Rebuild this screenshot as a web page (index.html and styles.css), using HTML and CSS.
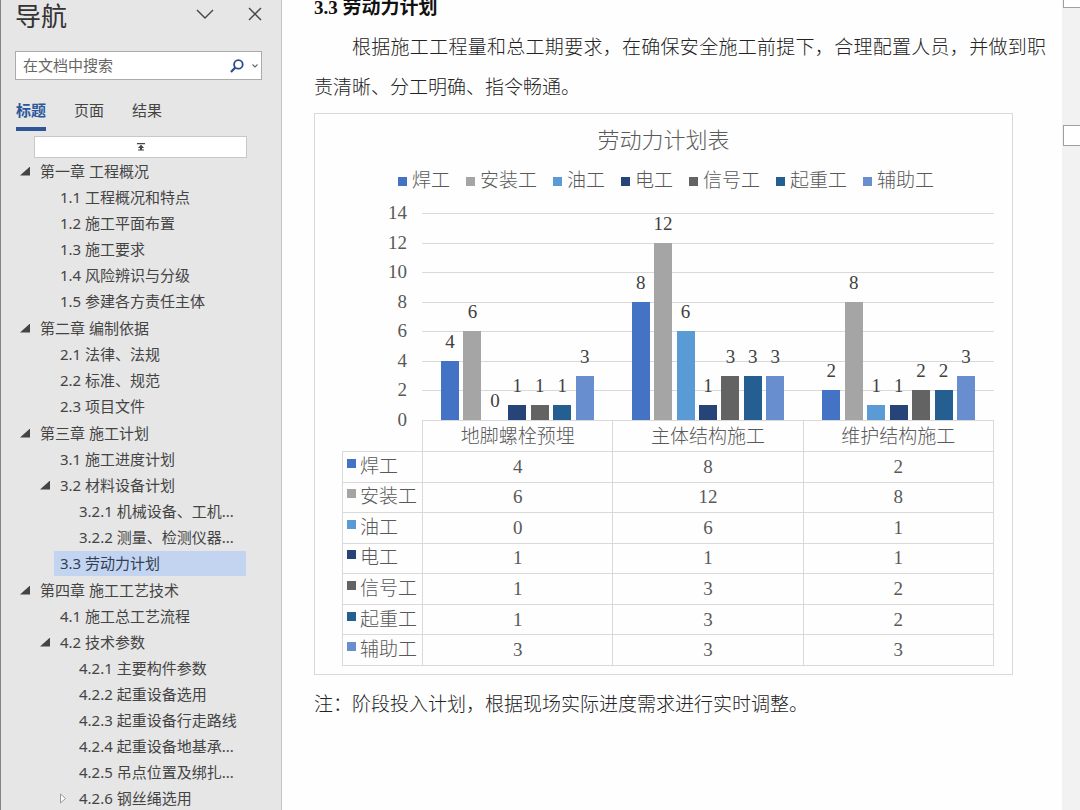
FILE: index.html
```html
<!DOCTYPE html>
<html lang="zh-CN">
<head>
<meta charset="utf-8">
<title>劳动力计划</title>
<link rel="stylesheet" href="styles.css">
</head>
<body>
<div class="app">
  <aside class="nav">
    <header class="nav-head">
      <h1 class="nav-title">导航</h1>
      <button class="icon-btn" type="button" aria-label="任务窗格选项"><svg width="18" height="18" viewBox="0 0 18 18"><path d="M1 5l8 8 8-8" fill="none" stroke="#444" stroke-width="1.4"/></svg></button>
      <button class="icon-btn close" type="button" aria-label="关闭"><svg width="14" height="14" viewBox="0 0 14 14"><path d="M1 1l12 12M13 1L1 13" fill="none" stroke="#444" stroke-width="1.4"/></svg></button>
    </header>
    <form class="search">
      <input class="search-input" type="text" placeholder="在文档中搜索" aria-label="在文档中搜索">
      <button class="icon-btn" type="button" aria-label="搜索"><svg width="14" height="14" viewBox="0 0 14 14"><circle cx="8.4" cy="5.4" r="4.3" fill="none" stroke="#2b4a8c" stroke-width="1.8"/><path d="M5.3 8.6L1 13" stroke="#2b4a8c" stroke-width="2.2"/></svg></button>
      <button class="icon-btn" type="button" aria-label="搜索选项"><svg width="6" height="4" viewBox="0 0 6 4"><path d="M.5 .5L3 3 5.500 .5" fill="none" stroke="#666" stroke-width="1.1"/></svg></button>
    </form>
    <div class="tabs" role="tablist">
      <button class="tab active" type="button" role="tab" aria-selected="true">标题</button>
      <button class="tab" type="button" role="tab" aria-selected="false">页面</button>
      <button class="tab" type="button" role="tab" aria-selected="false">结果</button>
    </div>
    <button class="jump" type="button" aria-label="跳转到开头"><svg width="8" height="8" viewBox="0 0 8 8"><path d="M0 .6h8M1 7h6" stroke="#444" stroke-width="1.2"/><path d="M4 1.800l3.200 3.200H.8z" fill="#444"/><path d="M4 4v3" stroke="#444" stroke-width="2"/></svg></button>
    <ul class="tree">
      <li class="chapter"><div class="row l1"><button class="toggle open" type="button" aria-label="折叠"></button><a href="#c1">第一章 工程概况</a></div>
        <ul>
          <li class="row l2"><a href="#s11">1.1 工程概况和特点</a></li>
          <li class="row l2"><a href="#s12">1.2 施工平面布置</a></li>
          <li class="row l2"><a href="#s13">1.3 施工要求</a></li>
          <li class="row l2"><a href="#s14">1.4 风险辨识与分级</a></li>
          <li class="row l2"><a href="#s15">1.5 参建各方责任主体</a></li>
        </ul></li>
      <li class="chapter"><div class="row l1"><button class="toggle open" type="button" aria-label="折叠"></button><a href="#c2">第二章 编制依据</a></div>
        <ul>
          <li class="row l2"><a href="#s21">2.1 法律、法规</a></li>
          <li class="row l2"><a href="#s22">2.2 标准、规范</a></li>
          <li class="row l2"><a href="#s23">2.3 项目文件</a></li>
        </ul></li>
      <li class="chapter"><div class="row l1"><button class="toggle open" type="button" aria-label="折叠"></button><a href="#c3">第三章 施工计划</a></div>
        <ul>
          <li class="row l2"><a href="#s31">3.1 施工进度计划</a></li>
          <li class="row l2"><button class="toggle open" type="button" aria-label="折叠"></button><a href="#s32">3.2 材料设备计划</a></li>
          <li class="row l3"><a href="#s321">3.2.1 机械设备、工机...</a></li>
          <li class="row l3"><a href="#s322">3.2.2 测量、检测仪器...</a></li>
          <li class="row l2"><a class="current" href="#s33">3.3 劳动力计划</a></li>
        </ul></li>
      <li class="chapter"><div class="row l1"><button class="toggle open" type="button" aria-label="折叠"></button><a href="#c4">第四章 施工工艺技术</a></div>
        <ul>
          <li class="row l2"><a href="#s41">4.1 施工总工艺流程</a></li>
          <li class="row l2"><button class="toggle open" type="button" aria-label="折叠"></button><a href="#s42">4.2 技术参数</a></li>
          <li class="row l3"><a href="#s421">4.2.1 主要构件参数</a></li>
          <li class="row l3"><a href="#s422">4.2.2 起重设备选用</a></li>
          <li class="row l3"><a href="#s423">4.2.3 起重设备行走路线</a></li>
          <li class="row l3"><a href="#s424">4.2.4 起重设备地基承...</a></li>
          <li class="row l3"><a href="#s425">4.2.5 吊点位置及绑扎...</a></li>
          <li class="row l3"><button class="toggle" type="button" aria-label="展开"><svg width="8" height="11" viewBox="0 0 8 11"><path d="M1.500 1v9L6.500 5.500z" fill="#fff" stroke="#999"/></svg></button><a href="#s426">4.2.6 钢丝绳选用</a></li>
        </ul></li>
    </ul>
  </aside>

  <main class="page">
    <h2 class="heading" id="s33">3.3 劳动力计划</h2>
    <p class="para indent">根据施工工程量和总工期要求，在确保安全施工前提下，合理配置人员，并做到职责清晰、分工明确、指令畅通。</p>
    <figure class="chart">
      <figcaption class="chart-title">劳动力计划表</figcaption>
      <ul class="legend">
        <li><i class="key k1"></i>焊工</li><li><i class="key k2"></i>安装工</li><li><i class="key k3"></i>油工</li><li><i class="key k4"></i>电工</li><li><i class="key k5"></i>信号工</li><li><i class="key k6"></i>起重工</li><li><i class="key k7"></i>辅助工</li>
      </ul>
      <div class="graph">
        <div class="axis"><span>14</span><span>12</span><span>10</span><span>8</span><span>6</span><span>4</span><span>2</span><span>0</span></div>
        <div class="plot">
          <div class="lines"><i></i><i></i><i></i><i></i><i></i><i></i><i></i></div>
          <div class="groups" id="groups"></div>
        </div>
      </div>
      <table class="data">
        <thead><tr><td class="blank"></td><th scope="col">地脚螺栓预埋</th><th scope="col">主体结构施工</th><th scope="col">维护结构施工</th></tr></thead>
        <tbody>
          <tr><th scope="row"><i class="key k1"></i>焊工</th><td>4</td><td>8</td><td>2</td></tr>
          <tr><th scope="row"><i class="key k2"></i>安装工</th><td>6</td><td>12</td><td>8</td></tr>
          <tr><th scope="row"><i class="key k3"></i>油工</th><td>0</td><td>6</td><td>1</td></tr>
          <tr><th scope="row"><i class="key k4"></i>电工</th><td>1</td><td>1</td><td>1</td></tr>
          <tr><th scope="row"><i class="key k5"></i>信号工</th><td>1</td><td>3</td><td>2</td></tr>
          <tr><th scope="row"><i class="key k6"></i>起重工</th><td>1</td><td>3</td><td>2</td></tr>
          <tr><th scope="row"><i class="key k7"></i>辅助工</th><td>3</td><td>3</td><td>3</td></tr>
        </tbody>
      </table>
    </figure>
    <p class="para">注：阶段投入计划，根据现场实际进度需求进行实时调整。</p>
  </main>

  <div class="gutter"><div class="slot first"></div><div class="slot"></div></div>
</div>
<script src="chart.js"></script>
</body>
</html>
```
FILE: styles.css
```css
* { box-sizing: border-box; }
body {
  margin: 0;
  background: #fefefe;
  font-family: "Noto Sans", "Noto Sans CJK SC", sans-serif;
  color: #444;
}
ul { list-style: none; margin: 0; padding: 0; }
button { border: 0; padding: 0; background: none; font: inherit; color: inherit; }
a { color: inherit; text-decoration: none; }
svg { display: block; }

.app { display: flex; height: 100vh; overflow: hidden; }

/* Navigation pane */
.nav {
  flex: 0 0 282px;
  background: #e6e6e6;
  border-left: 1px solid #858585;
  border-right: 1px solid #c4c4c4;
  overflow: hidden;
}
.nav-head { display: flex; align-items: center; height: 28px; padding: 0 19px 0 14px; }
.nav-title { flex: 1; margin: 0; padding-top: 4px; font-size: 26px; line-height: 28px; font-weight: 400; color: #333; }
.close { margin-left: 34px; }
.search {
  display: flex;
  align-items: center;
  gap: 8px;
  height: 29px;
  margin: 23px 19px 0 14px;
  padding-right: 3px;
  background: #fff;
  border: 1px solid #ababab;
}
.search-input {
  flex: 1;
  min-width: 0;
  height: 24px;
  border: 0;
  padding: 0 0 3px 7px;
  background: none;
  outline: 0;
  font: 15px "Noto Sans CJK SC", sans-serif;
  color: #444;
}
.search-input::placeholder { color: #666; opacity: 1; }
.tabs { display: flex; gap: 28px; margin: 18px 0 0 15px; }
.tab { height: 33px; padding: 0 0 8px; font-size: 15px; line-height: 24px; border-bottom: 4px solid transparent; }
.tab.active { color: #2b579a; font-weight: 700; border-bottom-color: #2f5597; }
.jump {
  display: flex;
  align-items: center;
  justify-content: center;
  width: 213px;
  height: 22px;
  margin: 5px 0 0 33px;
  background: #fff;
  border: 1px solid #c8c8c8;
}
.chapter + .chapter { margin-top: 1px; }
.row { display: flex; align-items: center; justify-content: flex-end; height: 26px; padding-right: 35px; font-size: 15px; line-height: 25px; white-space: nowrap; }
.row a { padding-left: 6px; }
.l1 a { width: 212px; }
.l2 a { width: 192px; }
.l3 a { width: 173px; }
.current { background: #c2d4f0; color: #333f55; }
.toggle { width: 10px; height: 11px; margin-right: 4px; }
.toggle.open { height: 9px; background: #444; clip-path: polygon(100% 0, 100% 100%, 0 100%); }

/* Document */
.page {
  flex: 1;
  min-width: 0;
  margin-top: -12px;
  padding: 0 16px 0 32px;
  font-family: "Liberation Serif", "Noto Sans CJK SC", serif;
  font-size: 19px;
  color: #222;
}
.heading { margin: 0; font-size: 19px; line-height: 40px; font-weight: 700; color: #111; }
.para { margin: 0; line-height: 40px; font-weight: 300; text-align: justify; }
.indent { text-indent: 2em; }

.chart {
  margin: 5px 33px 10px 0;
  padding: 13px 18px 8px 27px;
  border: 1px solid #d9d9d9;
  color: #595959;
  font-weight: 300;
}
.chart-title { padding-right: 9px; font-size: 22px; line-height: 28px; text-align: center; }
.legend { display: flex; justify-content: center; gap: 16px; margin-top: 14px; padding-right: 4px; line-height: 24px; }
.legend li { display: flex; align-items: center; gap: 5px; }
.key { display: inline-block; width: 9px; height: 9px; }
.k1 { background: #4472c4; }
.k2 { background: #a5a5a5; }
.k3 { background: #5b9bd5; }
.k4 { background: #264478; }
.k5 { background: #636363; }
.k6 { background: #255e91; }
.k7 { background: #698ed0; }

.graph { display: flex; height: 207px; margin-top: 20px; }
.axis {
  flex: 0 0 80px;
  display: flex;
  flex-direction: column;
  justify-content: space-between;
  margin: -12px 0;
  padding-right: 15px;
  line-height: 24px;
  text-align: right;
}
.plot { flex: 1; display: grid; }
.lines, .groups { grid-area: 1 / 1; display: flex; }
.lines { flex-direction: column; }
.lines i { flex: 1; border-top: 1px solid #d9d9d9; }
.group { flex: 1; display: flex; justify-content: space-between; padding: 0 19px; }
.col { width: 18px; height: 100%; display: flex; flex-direction: column; justify-content: flex-end; align-items: center; }
.col span { line-height: 24px; margin-bottom: 7px; color: #404040; }
.bar { width: 100%; flex-shrink: 0; }

.data { width: 100%; height: 246px; border-collapse: collapse; table-layout: fixed; }
.data th, .data td { padding: 0; border: 1px solid #d9d9d9; font-weight: 300; line-height: 24px; text-align: center; }
.data thead th { height: 31px; padding-top: 2px; }
.data .blank { width: 80px; border-top: 0; border-left: 0; }
.data tbody th { text-align: left; padding-left: 4px; white-space: nowrap; }
.data .key { margin-right: 4px; vertical-align: 5px; }

/* Strip beside the page */
.gutter { flex: 0 0 18px; padding-left: 1px; background: #f2f2f2; }
.slot { height: 21px; background: #fff; border: 1px solid #a0a0a0; border-right: 0; }
.slot.first { height: 8px; border-top: 0; margin-bottom: 117px; }
```
FILE: chart.js
```javascript
const stages = [
  [4, 6, 0, 1, 1, 1, 3],
  [8, 12, 6, 1, 3, 3, 3],
  [2, 8, 1, 1, 2, 2, 3]
];
const axisMax = 14;
document.getElementById('groups').innerHTML = stages.map(values =>
  '<div class="group">' + values.map((v, i) =>
    `<div class="col"><span>${v}</span><div class="bar k${i + 1}" style="height:${v / axisMax * 100}%"></div></div>`
  ).join('') + '</div>'
).join('');
```
